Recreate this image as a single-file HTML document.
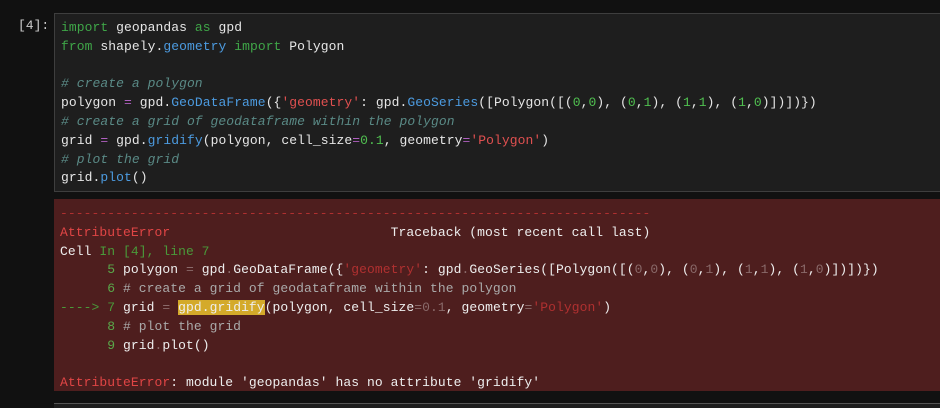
<!DOCTYPE html>
<html><head><style>
body{margin:0;background:#111111;width:940px;height:407px;overflow:hidden;font-family:"Liberation Mono",monospace;font-size:13px;}
pre{margin:0;font-family:inherit;font-size:13px;line-height:18.8px;letter-spacing:0.07px;white-space:pre;}
.p{position:absolute;left:18px;top:18px;color:#cccccc;}
.code{position:absolute;left:54px;top:13px;width:890px;height:179px;background:#1e1e1e;border:1px solid #3e3e3e;box-sizing:border-box;}
.code pre{position:absolute;left:6px;top:5px;color:#e6e6e6;}
.err{position:absolute;left:54px;top:199px;width:886px;height:192px;background:#4e1e1e;}
.err pre{position:absolute;left:6px;top:6px;color:#eeeeee;}
.bot{position:absolute;left:54px;top:403px;width:886px;height:4px;border-top:1px solid #555;background:#1e1e1e;}
.k{color:#3fa648}.b{color:#4c9be0}.s{color:#e05050}.c{color:#5a8a86;font-style:italic}.o{color:#b060c0}.n{color:#50c050}
.r{color:#e04545}.g{color:#4a9a3a}.d{color:#b03030}.hl{background:#d4aa2a}.m{color:#8a6a6a}.gr{color:#aaaaaa}.ln{color:#5aa84a}
</style></head><body>
<div class="p">[4]:</div>
<div class="code"><pre><span class="k">import</span> geopandas <span class="k">as</span> gpd
<span class="k">from</span> shapely.<span class="b">geometry</span> <span class="k">import</span> Polygon

<span class="c"># create a polygon</span>
polygon <span class="o">=</span> gpd.<span class="b">GeoDataFrame</span>({<span class="s">'geometry'</span>: gpd.<span class="b">GeoSeries</span>([Polygon([(<span class="n">0</span>,<span class="n">0</span>), (<span class="n">0</span>,<span class="n">1</span>), (<span class="n">1</span>,<span class="n">1</span>), (<span class="n">1</span>,<span class="n">0</span>)])])})
<span class="c"># create a grid of geodataframe within the polygon</span>
grid <span class="o">=</span> gpd.<span class="b">gridify</span>(polygon, cell_size<span class="o">=</span><span class="n">0.1</span>, geometry<span class="o">=</span><span class="s">'Polygon'</span>)
<span class="c"># plot the grid</span>
grid.<span class="b">plot</span>()</pre></div>
<div class="err"><pre><span class="d">---------------------------------------------------------------------------</span>
<span class="r">AttributeError</span>                            Traceback (most recent call last)
Cell <span class="g">In [4], line 7</span>
<span class="ln">      5</span> polygon <span class="m">=</span> gpd<span class="m">.</span>GeoDataFrame({<span class="d">'geometry'</span>: gpd<span class="m">.</span>GeoSeries([Polygon([(<span class="m">0</span>,<span class="m">0</span>), (<span class="m">0</span>,<span class="m">1</span>), (<span class="m">1</span>,<span class="m">1</span>), (<span class="m">1</span>,<span class="m">0</span>)])])})
<span class="ln">      6</span> <span class="gr"># create a grid of geodataframe within the polygon</span>
<span class="g">----&gt; 7</span> grid <span class="m">=</span> <span class="hl">gpd.gridify</span>(polygon, cell_size<span class="m">=0.1</span>, geometry<span class="m">=</span><span class="d">'Polygon'</span>)
<span class="ln">      8</span> <span class="gr"># plot the grid</span>
<span class="ln">      9</span> grid<span class="m">.</span>plot()

<span class="r">AttributeError</span>: module 'geopandas' has no attribute 'gridify'</pre></div>
<div class="bot"></div>
</body></html>
